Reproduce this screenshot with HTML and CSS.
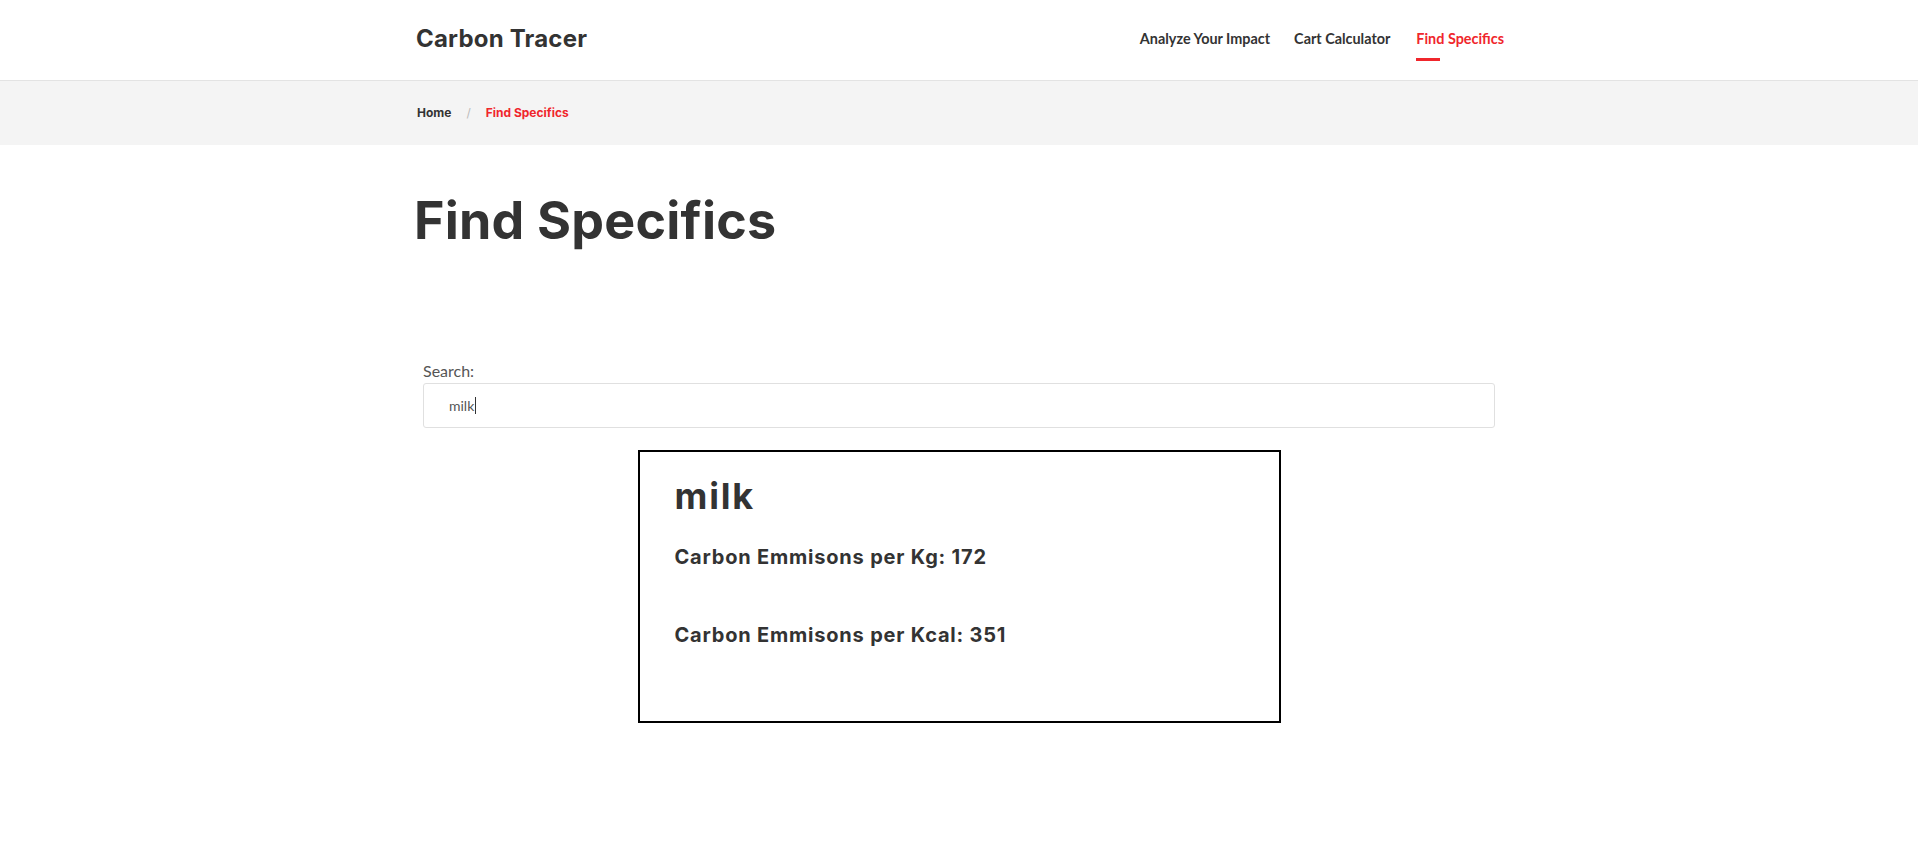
FILE: index.html
```html
<!DOCTYPE html>
<html lang="en">
<head>
<meta charset="utf-8">
<title>Find Specifics - Carbon Tracer</title>
<link rel="stylesheet" href="styles.css">
</head>
<body>
<header class="site-header">
  <div class="container header-inner">
    <a class="brand" href="#">Carbon Tracer</a>
    <nav class="main-nav">
      <a class="nav-link" href="#">Analyze Your Impact</a>
      <a class="nav-link" href="#">Cart Calculator</a>
      <a class="nav-link active" href="#">Find Specifics</a>
    </nav>
  </div>
</header>
<div class="breadcrumb-bar">
  <div class="container breadcrumb">
    <a class="crumb" href="#">Home</a>
    <span class="sep">/</span>
    <span class="crumb current">Find Specifics</span>
  </div>
</div>
<main class="container">
  <h1 class="page-title">Find Specifics</h1>
  <div class="search-block">
    <label class="search-label">Search:</label>
    <div class="search-input"><span class="search-value">milk</span><span class="caret"></span></div>
  </div>
  <section class="result-card">
    <h2 class="result-name">milk</h2>
    <h5 class="result-line">Carbon Emmisons per Kg: 172</h5>
    <h5 class="result-line second">Carbon Emmisons per Kcal: 351</h5>
  </section>
</main>
</body>
</html>
```
FILE: styles.css
```css
* { box-sizing: border-box; }
html, body { margin: 0; padding: 0; background: #fff; }
body { font-family: "Lato", "Liberation Sans", sans-serif; color: #333; }
a { text-decoration: none; color: inherit; }

.container { width: 1110px; margin: 0 auto; }

.site-header { height: 81px; border-bottom: 1px solid #e3e3e3; }
.header-inner { height: 80px; display: flex; align-items: center; justify-content: space-between; padding-left: 12px; }
.brand { font-family: "Inter", sans-serif; font-weight: 700; font-size: 24px; color: #333; letter-spacing: 0.2px; margin-top: -4px; }
.main-nav { display: flex; align-items: center; height: 100%; margin-top: -3px; }
.nav-link { font-family: "Lato", sans-serif; font-weight: 700; font-size: 14.4px; color: #333; padding: 0 12px; position: relative; }
.nav-link:last-child { padding-right: 10px; padding-left: 14px; }
.nav-link.active { color: #f0262c; }
.nav-link.active::after { content: ""; position: absolute; left: 14px; top: 28px; width: 24px; height: 3px; background: #f0262c; }

.breadcrumb-bar { background: #f4f4f4; height: 64px; }
.breadcrumb { height: 64px; display: flex; align-items: center; padding-left: 13px; padding-bottom: 1px; font-family: "Inter", sans-serif; font-weight: 700; font-size: 12px; }
.crumb { color: #333; }
.crumb.current { color: #f0262c; }
.sep { color: #bbb; font-weight: 400; margin: 0 15px 0 15px; }

.page-title { font-family: "Inter", sans-serif; font-weight: 700; font-size: 52px; line-height: 62px; color: #333; margin: 45px 0 0 10px; letter-spacing: 0.2px; }

.search-block { margin: 107px 19px 0; }
.search-label { display: block; font-size: 16px; line-height: 24px; color: #555; }
.search-input { height: 45px; border: 1px solid #e0e0e0; border-radius: 3px; display: flex; align-items: center; padding-left: 25px; font-size: 14px; color: #555; }
.caret { display: inline-block; width: 1px; height: 17px; background: #333; margin-left: 1px; }

.result-card { width: 643px; margin: 22px auto 0; border: 2px solid #000; padding: 25px 35px 74px; }
.result-name { font-family: "Inter", sans-serif; font-weight: 700; font-size: 36px; line-height: 38px; margin: 0; color: #333; letter-spacing: 1.8px; }
.result-line { font-family: "Inter", sans-serif; font-weight: 700; font-size: 20px; line-height: 24px; margin: 30px 0 0; color: #333; letter-spacing: 0.8px; }
.result-line.second { margin-top: 54px; }
```
